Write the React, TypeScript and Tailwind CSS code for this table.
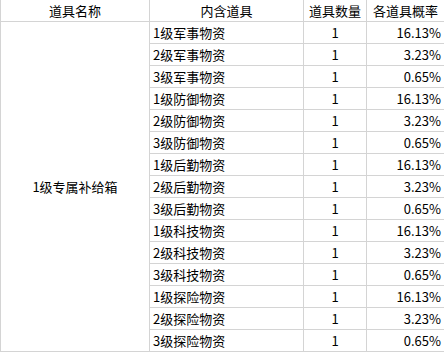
import React from "react";

const levels = ["1", "2", "3"];
const kinds = ["军事", "防御", "后勤", "科技", "探险"];
const probs = ["16.13%", "3.23%", "0.65%"];

const rows = kinds.flatMap((k) =>
  levels.map((l, i) => ({ name: `${l}级${k}物资`, qty: "1", p: probs[i] }))
);

export default function App() {
  return (
    <div
      className="w-[444px] h-[352px] bg-white text-black text-[13px] leading-none"
      style={{ fontFamily: '"Microsoft YaHei", "Noto Sans CJK SC", "Noto Sans", sans-serif' }}
    >
      <div className="bg-[#d4d4d4] pl-px pb-px w-[444px]">
        <div className="grid grid-cols-[148px_153px_62px_77px] grid-rows-[21px_repeat(15,21px)] gap-px">
          <div className="bg-white flex items-center justify-center">道具名称</div>
          <div className="bg-white flex items-center justify-center">内含道具</div>
          <div className="bg-white flex items-center justify-center">道具数量</div>
          <div className="bg-white flex items-center justify-center">各道具概率</div>
          <div className="bg-white row-span-15 flex items-center justify-center" style={{ gridRow: "2 / span 15" }}>
            1级专属补给箱
          </div>
          {rows.map((r, idx) => (
            <React.Fragment key={idx}>
              <div className="bg-white flex items-center pl-[3px]">{r.name}</div>
              <div className="bg-white flex items-center justify-center">{r.qty}</div>
              <div className="bg-white flex items-center justify-end pr-[3px]">{r.p}</div>
            </React.Fragment>
          ))}
        </div>
      </div>
    </div>
  );
}
